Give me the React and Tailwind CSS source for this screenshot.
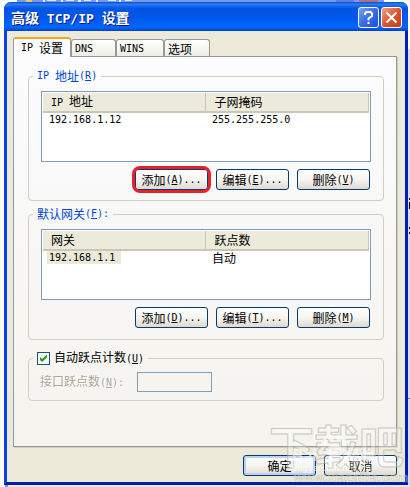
import React from 'react';

// Latin text runs at half the width of the Chinese glyphs next to it
function Latin({ children }) {
  return <span className="font-['DejaVu_Sans_Mono',monospace] text-[10px]">{children}</span>;
}

function Key({ letter, suffix = '' }) {
  return (
    <Latin>
      (<u className="underline-offset-1">{letter}</u>){suffix}
    </Latin>
  );
}

function DialogButton({ children, className = '' }) {
  return (
    <button
      type="button"
      className={`flex h-[21px] w-[73px] items-center justify-center whitespace-pre rounded-[3px] border border-[#003c74] bg-linear-to-b from-white via-[#f6f5f0] to-[#dedad0] ${className}`}
    >
      {children}
    </button>
  );
}

function Tab({ active, width, children }) {
  const look = active
    ? 'h-5 rounded-t-[3px] border border-b-0 border-t-2 border-[#919b9c] border-t-[#f5a623] bg-[#fcfcfe] pl-[7px] -mb-px z-10'
    : 'h-[17px] rounded-t-[3px] border border-b-0 border-[#919b9c] bg-linear-to-b from-white to-[#eeede4] pl-[3px] pt-0.5';
  return (
    <button type="button" role="tab" aria-selected={!!active} className={`relative flex items-center whitespace-pre ${width} ${look}`}>
      {children}
    </button>
  );
}

function Group({ legend, className = '', children }) {
  return (
    <fieldset className={`min-w-0 rounded-[4px] border border-[#d0d0bf] px-3 ${className}`}>
      <legend className="-ml-2 flex h-4 items-center whitespace-pre px-1 text-[#0046d5]">{legend}</legend>
      {children}
    </fieldset>
  );
}

function ListTable({ columns, row, selected }) {
  return (
    <div className="mt-[7px] h-[71px] border border-[#7f9db9] bg-white p-px">
      <table className="w-full table-fixed border-collapse">
        <thead>
          <tr className="h-[19px] border-b-2 border-[#cbc7b8] bg-[#ebeadb]">
            <th className="w-[162px] whitespace-pre border-r border-[#c7c5b2] p-0 pl-2 text-left font-normal">{columns[0]}</th>
            <th className="border-r border-[#c7c5b2] p-0 pl-[9px] text-left font-normal">{columns[1]}</th>
          </tr>
        </thead>
        <tbody>
          <tr>
            <td className="p-0 pl-1">
              <span className={`flex h-[13px] w-[74px] items-center pl-0.5 ${selected ? 'bg-[#ece9d8]' : ''}`}>{row[0]}</span>
            </td>
            <td className="p-0 pl-[7px]">
              <span className="flex h-[13px] items-center">{row[1]}</span>
            </td>
          </tr>
        </tbody>
      </table>
    </div>
  );
}

// slivers of the window that sits behind the dialog
function BackWindow() {
  return (
    <>
      <div className="absolute left-[17px] right-[26px] top-0 h-3 bg-[#7b9ae5]">
        <svg viewBox="0 0 367 2" className="h-0.5 w-[367px]" fill="#dfe8fb">
          <rect x="9" width="6" height="2" fill="#e8c860" />
          <path d="M26 0h2v2h-2zM30 0h9v1h-9zM44 0h2v2h-2zM49 0h8v1h-8zM61 0h3v2h-3zM67 0h7v1h-7zM79 0h2v2h-2zM91 0h8v1h-8zM102 0h2v2h-2zM108 0h7v1h-7z" />
          <rect x="319" width="18" height="2" fill="#5b7de0" />
          <rect x="342" width="19" height="2" fill="#b0707f" />
        </svg>
      </div>
      <div className="absolute bottom-0 right-0 top-[49px] w-0.5 bg-[#d9dcf0]">
        <svg viewBox="0 0 2 438" className="h-[438px] w-0.5">
          <path d="M1 149h1v2h-1zM1 153h1v7h-1zM1 178h1v2h-1zM1 183h1v2h-1z" fill="#000" />
          <path d="M0 349h2v1h-2z" fill="#3fa33f" />
        </svg>
      </div>
      <div className="absolute bottom-0 left-[5px] h-0.5 w-[3px] bg-[#7b8fe0]" />
      <div className="absolute bottom-0 left-2 right-0 h-0.5 bg-[#ece9e0]" />
    </>
  );
}

function Watermark() {
  return (
    <svg viewBox="0 0 140 66" className="pointer-events-none absolute bottom-0 right-0 h-[66px] w-[140px] overflow-visible" aria-hidden="true">
      <g fontFamily="'Noto Sans CJK SC', sans-serif" fontWeight="700" fill="#fff" fillOpacity="0.3" stroke="#a9a79e" strokeOpacity="0.6">
        <text x="-1" y="43" fontSize="45" strokeWidth="1">下载吧</text>
        <text x="24" y="61" fontSize="13" strokeWidth="0.500" fontFamily="'Liberation Sans', sans-serif">www.xiazaiba.com</text>
      </g>
      <g fill="#fff" fillOpacity="0.6" fontWeight="700">
        <text x="22" y="40" fontSize="16" fontFamily="'Liberation Sans', sans-serif">Bai</text>
        <circle cx="54" cy="21" r="3" />
        <circle cx="61" cy="17" r="3" />
        <circle cx="69" cy="17" r="3" />
        <circle cx="75" cy="22" r="3" />
        <ellipse cx="65" cy="30" rx="9" ry="6" />
        <text x="76" y="39" fontSize="14" fontFamily="'Noto Sans CJK SC', sans-serif">经验</text>
        <text x="22" y="50" fontSize="9" fontFamily="'Liberation Sans', sans-serif">jingyan.baidu.com</text>
      </g>
    </svg>
  );
}

export default function App() {
  return (
    <div className="relative min-h-screen bg-[#fdfdf8] pb-0.5 pl-1 pr-0.5 pt-0.5 font-['Noto_Sans_CJK_SC',sans-serif] text-[12px] leading-[14px] text-black">
      <BackWindow />
      <div className="relative flex min-h-[483px] flex-col rounded-t-[7px] border-3 border-t-0 border-[#0842e4] border-b-[#001ea0] border-r-[#001eb4] bg-[#ece9d8]">
        <header className="-mx-[3px] flex h-[29px] items-center rounded-t-[7px] bg-[linear-gradient(#0a4fd0,#2a7cf5_8%,#0054e3_22%,#0058ea_55%,#0066ff_88%,#0040c8)] pl-[7px] pr-[6px] pt-0.5">
          <h1 className="flex-1 whitespace-pre text-[14px] font-bold text-white [text-shadow:1px_1px_#0a1883]">
            高级<span className="font-['DejaVu_Sans_Mono',monospace] text-[13px]"> TCP/IP </span>设置
          </h1>
          <div className="flex gap-0.5">
            <button type="button" aria-label="帮助" className="flex size-[21px] items-center justify-center rounded-[3px] border border-white bg-linear-to-br from-[#7ba2f5] via-[#3a6be8] to-[#1c4fd8]">
              <svg viewBox="0 0 13 15" className="h-[15px] w-[13px]" fill="none" stroke="#fff" strokeWidth="2">
                <path d="M3 5V3.5L4.500 2H8.500L10 3.500V6L6.500 8.500V10.500M6.500 12V14" />
              </svg>
            </button>
            <button type="button" aria-label="关闭" className="flex size-[21px] items-center justify-center rounded-[3px] border border-white bg-linear-to-br from-[#f0a088] via-[#e0532d] to-[#c83a12]">
              <svg viewBox="0 0 13 13" className="size-[13px]" stroke="#fff" strokeWidth="2.200">
                <path d="M1.500 1.500L11.500 11.500M11.500 1.500L1.500 11.500" />
              </svg>
            </button>
          </div>
        </header>

        <main className="flex flex-1 flex-col pb-[6px] pl-[6px] pr-2 pt-[6px]">
          <div role="tablist" className="flex items-end">
            <Tab active width="w-[58px]"><Latin>IP </Latin>设置</Tab>
            <Tab width="w-[45px]"><Latin>DNS</Latin></Tab>
            <Tab width="w-12"><Latin>WINS</Latin></Tab>
            <Tab width="w-[46px]">选项</Tab>
          </div>

          <section className="flex flex-col border border-[#919b9c] bg-linear-to-b from-[#fcfcfe] to-[#f4f3ee] pb-[45px] pl-[14px] pr-3 pt-[11px] shadow-[1px_1px_#d0ceba]">
            <Group legend={<><Latin>IP </Latin>地址<Key letter="R" /></>} className="h-[133px]">
              <ListTable
                columns={[<><Latin>IP </Latin>地址</>, '子网掩码']}
                row={[<Latin>192.168.1.12</Latin>, <Latin>255.255.255.0</Latin>]}
              />
              <div className="mt-[7px] flex justify-end gap-2 pr-px">
                <span className="rounded-[5px] outline-3 outline-[#e8202a]">
                  <DialogButton>添加<Key letter="A" suffix="..." /></DialogButton>
                </span>
                <DialogButton>编辑<Key letter="E" suffix="..." /></DialogButton>
                <DialogButton>删除<Key letter="V" /></DialogButton>
              </div>
            </Group>

            <Group legend={<>默认网关<Key letter="F" suffix=":" /></>} className="mt-[5px] h-[134px]">
              <ListTable columns={['网关', '跃点数']} row={[<Latin>192.168.1.1</Latin>, '自动']} selected />
              <div className="mt-[7px] flex justify-end gap-2 pr-px">
                <DialogButton>添加<Key letter="D" suffix="..." /></DialogButton>
                <DialogButton>编辑<Key letter="T" suffix="..." /></DialogButton>
                <DialogButton>删除<Key letter="M" /></DialogButton>
              </div>
            </Group>

            <Group
              className="mt-[10px] h-[51px]"
              legend={
                <label className="flex items-center gap-1 text-black">
                  <span className="relative flex size-[13px]">
                    <input type="checkbox" defaultChecked className="size-[13px] appearance-none border border-[#1c5180] bg-[#f8f8f5]" />
                    <svg viewBox="0 0 13 13" className="pointer-events-none absolute inset-0" fill="#21a121">
                      <path d="M3 5L5 7L10 2.500V5.500L5 10L3 8Z" />
                    </svg>
                  </span>
                  <span>自动跃点计数<Key letter="U" /></span>
                </label>
              }
            >
              <div className="-ml-px mt-[6px] flex items-center text-[#aca899]">
                <label htmlFor="metric" className="w-[97px] whitespace-pre [text-shadow:1px_1px_#fff]">
                  接口跃点数<Key letter="N" suffix=":" />
                </label>
                <input id="metric" type="text" disabled className="h-5 w-[75px] border border-[#7f9db9] bg-[#f5f4ef] px-1" />
              </div>
            </Group>
          </section>

          <footer className="mt-auto flex justify-end gap-2">
            <DialogButton className="inset-ring-2 inset-ring-[#b9cff5]">确定</DialogButton>
            <DialogButton>取消</DialogButton>
          </footer>
        </main>
      </div>
      <Watermark />
    </div>
  );
}
